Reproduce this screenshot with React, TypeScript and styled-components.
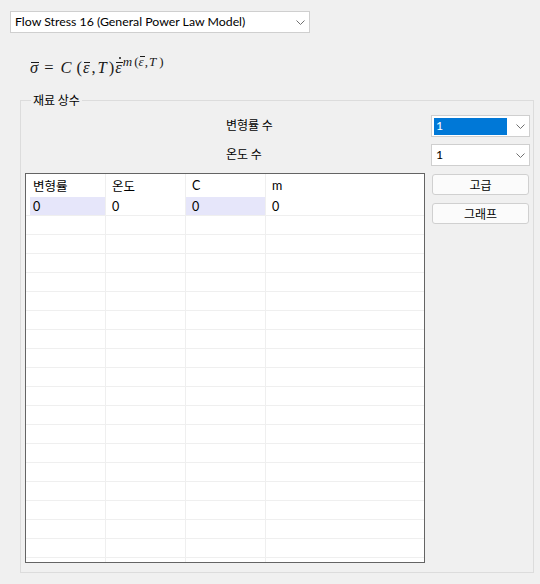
import React from "react";
import styled, { createGlobalStyle } from "styled-components";

const Global = createGlobalStyle`
  html, body { margin: 0; padding: 0; background: #f0f0f0; }
  body {
    font-family: Lato, "Noto Sans CJK KR", sans-serif;
    font-size: 12px;
    color: #000;
  }
`;

const Page = styled.div`
  width: 540px;
  height: 584px;
  padding-top: 11px;
  box-sizing: border-box;
  overflow: hidden;
`;

const Combo = styled.div<{ $w?: number }>`
  display: flex;
  align-items: center;
  box-sizing: border-box;
  width: ${(p) => (p.$w ? `${p.$w}px` : "100%")};
  height: 22px;
  background: #fff;
  border: 1px solid #cfcfcf;
  padding: 0 0 0 2px;
  line-height: 16px;
`;

const ComboText = styled.span<{ $selected?: boolean }>`
  flex: 1;
  display: flex;
  align-items: center;
  height: 17px;
  padding-left: 2px;
  margin-right: 4px;
  white-space: nowrap;
  font-family: Lato, "Noto Sans CJK KR", sans-serif;
  font-size: 12.3px;
  background: ${(p) => (p.$selected ? "#0078d7" : "transparent")};
  color: ${(p) => (p.$selected ? "#fff" : "#000")};
`;

const ChevronBox = styled.span`
  width: 18px;
  display: flex;
  align-items: center;
  justify-content: center;
`;

const Chevron = () => (
  <ChevronBox>
    <svg width="9" height="5" viewBox="0 0 9 5">
      <polyline points="0.5,0.5 4.5,4.5 8.5,0.5" fill="none" stroke="#707070" strokeWidth="1" />
    </svg>
  </ChevronBox>
);

const TopSelect = styled.div`
  margin-left: 10px;
`;

const Formula = styled.div`
  margin: 22px 0 0 30px;
  height: 26px;
  line-height: 26px;
  font-family: "Liberation Serif", "DejaVu Serif", serif;
  font-size: 16.5px;
  color: #1a1a1a;
  white-space: nowrap;
`;

const Var = styled.span`
  font-style: italic;
`;

/* italic symbol with a bar on top, and an optional dot above the bar */
const Over = styled.span<{ $dot?: boolean }>`
  position: relative;
  display: inline-block;
  font-style: italic;
  line-height: 1;
  &::before {
    content: "";
    position: absolute;
    left: 1px;
    right: -1px;
    top: 0.1em;
    border-top: 1px solid currentColor;
  }
  &::after {
    content: "";
    display: ${(p) => (p.$dot ? "block" : "none")};
    position: absolute;
    left: 4px;
    top: -0.16em;
    width: 2px;
    height: 2px;
    border-radius: 50%;
    background: currentColor;
  }
`;

const Sup = styled.span`
  display: inline-block;
  font-size: 13px;
  vertical-align: 7px;
  line-height: 1;
`;

const Gap = styled.span<{ $w: number }>`
  display: inline-block;
  width: ${(p) => p.$w}px;
`;

const Group = styled.fieldset`
  margin: 11px 6px 0 20px;
  padding: 0 3px 0 4px;
  height: 481px;
  box-sizing: border-box;
  border: 1px solid #dcdcdc;
  min-width: 0;
`;

const Legend = styled.legend`
  margin-left: 6px;
  padding: 0 2px;
  font-family: "Noto Sans CJK KR", sans-serif;
  font-size: 12px;
  line-height: 16px;
`;

const Body = styled.div`
  display: grid;
  grid-template-columns: 400px 99px;
  grid-template-rows: 22px 22px 390px;
  column-gap: 6px;
  row-gap: 7px;
  margin-top: 7px;
`;

const FieldLabel = styled.div`
  display: flex;
  align-items: center;
  padding-left: 201px;
  margin-top: -3px;
  font-family: "Noto Sans CJK KR", sans-serif;
  font-size: 12px;
`;

const Side = styled.div`
  display: flex;
  flex-direction: column;
  gap: 8px;
  padding: 1px 1px 0 1px;
`;

const Button = styled.button`
  height: 21px;
  box-sizing: border-box;
  background: #fbfbfb;
  border: 1px solid #d0d0d0;
  border-radius: 3px;
  font-family: "Noto Sans CJK KR", sans-serif;
  font-size: 12px;
  color: #000;
  padding: 0;
  line-height: 1;
`;

const Table = styled.div`
  box-sizing: border-box;
  border: 1px solid #646464;
  background: #fff;
  overflow: hidden;
`;

const Row = styled.div<{ $h: number }>`
  display: grid;
  grid-template-columns: 80px 80px 80px 1fr;
  height: ${(p) => p.$h}px;
`;

const Cell = styled.div<{ $tint?: boolean; $first?: boolean; $line?: boolean }>`
  display: flex;
  align-items: center;
  box-sizing: border-box;
  padding-left: ${(p) => (p.$first ? 7 : 6)}px;
  border-right: 1px solid #efefef;
  border-bottom: ${(p) => (p.$line ? "1px solid #efefef" : "none")};
  background: ${(p) => (p.$tint ? "#e6e6fa" : "#fff")};
  box-shadow: ${(p) => (p.$tint && p.$first ? "inset 4px 0 0 #fff" : "none")};
  font-family: Lato, "Noto Sans CJK KR", sans-serif;
  font-size: 12.5px;
  white-space: nowrap;
  &:last-child {
    border-right: none;
  }
`;

const columns = ["변형률", "온도", "C", "m"];
const values = ["0", "0", "0", "0"];
const emptyRows = Array.from({ length: 19 }, (_, i) => i);

export default function App() {
  return (
    <>
      <Global />
      <Page>
        <TopSelect>
          <Combo $w={300}>
            <ComboText>Flow Stress 16 (General Power Law Model)</ComboText>
            <Chevron />
          </Combo>
        </TopSelect>

        <Formula>
          <Over>σ</Over>
          <Gap $w={6} />=<Gap $w={7} />
          <Var>C</Var>
          <Gap $w={5} />(<Gap $w={1} />
          <Over>ε</Over>
          <Gap $w={2} />,<Gap $w={2} />
          <Var>T</Var>
          <Gap $w={2} />)<Gap $w={1} />
          <Over $dot>ε</Over>
          <Gap $w={1} />
          <Sup>
            <Var>m</Var>
            <Gap $w={2} />(<Over>ε</Over>
            <Gap $w={1} />,<Gap $w={1} />
            <Var>T</Var>
            <Gap $w={3} />)
          </Sup>
        </Formula>

        <Group>
          <Legend>재료 상수</Legend>
          <Body>
            <FieldLabel>변형률 수</FieldLabel>
            <Combo>
              <ComboText $selected>1</ComboText>
              <Chevron />
            </Combo>
            <FieldLabel>온도 수</FieldLabel>
            <Combo>
              <ComboText>1</ComboText>
              <Chevron />
            </Combo>
            <Table>
              <Row $h={23}>
                {columns.map((c, i) => (
                  <Cell key={c} $first={i === 0}>
                    {c}
                  </Cell>
                ))}
              </Row>
              <Row $h={19}>
                {values.map((v, i) => (
                  <Cell key={i} $first={i === 0} $tint={i % 2 === 0} $line>
                    {v}
                  </Cell>
                ))}
              </Row>
              {emptyRows.map((r) => (
                <Row key={r} $h={19}>
                  {columns.map((c, i) => (
                    <Cell key={c} $first={i === 0} $line />
                  ))}
                </Row>
              ))}
            </Table>
            <Side>
              <Button>고급</Button>
              <Button>그래프</Button>
            </Side>
          </Body>
        </Group>
      </Page>
    </>
  );
}
